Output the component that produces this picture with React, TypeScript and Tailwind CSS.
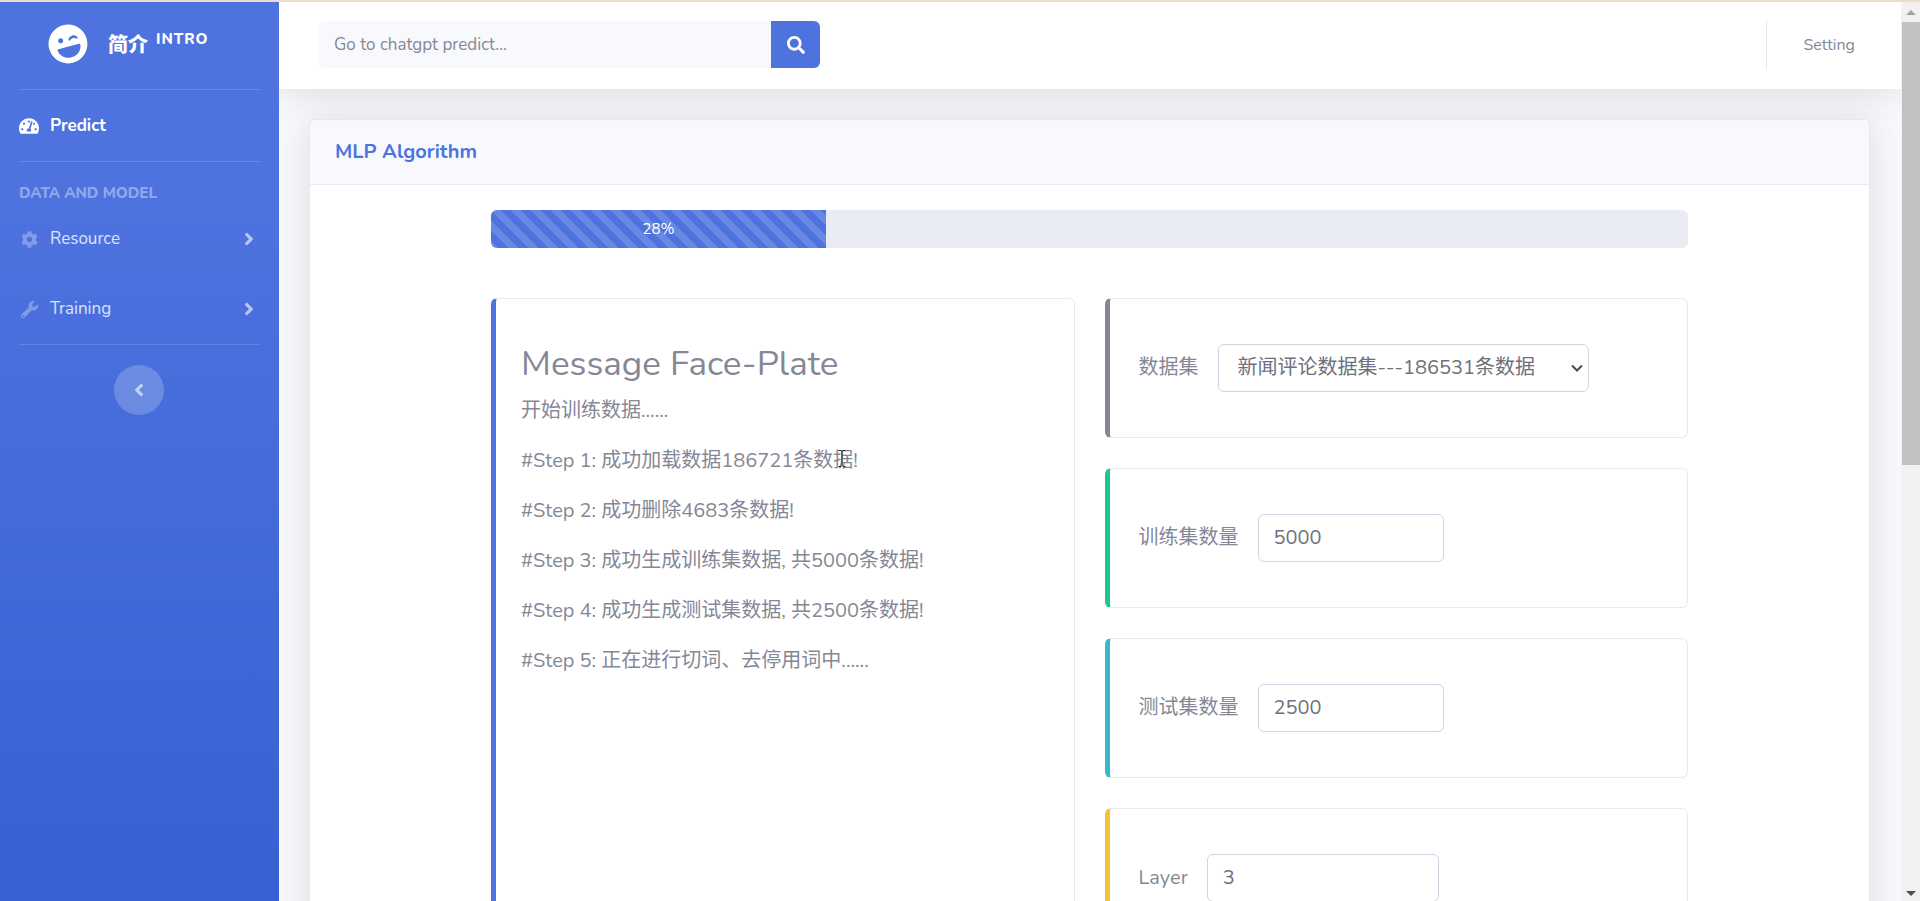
import type { ReactNode } from 'react';
import {
  FaAngleLeft,
  FaAngleRight,
  FaCog,
  FaLaughWink,
  FaSearch,
  FaTachometerAlt,
  FaWrench,
} from 'react-icons/fa';

const STEPS = [
  '#Step 1: 成功加载数据186721条数据!',
  '#Step 2: 成功删除4683条数据!',
  '#Step 3: 成功生成训练集数据, 共5000条数据!',
  '#Step 4: 成功生成测试集数据, 共2500条数据!',
  '#Step 5: 正在进行切词、去停用词中......',
];

const PROGRESS = 28;

function Divider() {
  return <hr className="mx-[19px] border-t border-white/15" />;
}

function NavItem({ icon, label }: { icon: ReactNode; label: string }) {
  return (
    <a href="#" className="flex h-[70px] items-center pl-[19px] pr-5 text-[17px] text-white/80">
      <span className="flex w-5 justify-center text-[17px] text-white/30">{icon}</span>
      <span className="ml-[11px] flex-1">{label}</span>
      <FaAngleRight className="text-xl text-white/60" />
    </a>
  );
}

function Sidebar() {
  return (
    <nav className="flex w-[279px] shrink-0 flex-col bg-linear-to-b from-[#4e73df] from-20% to-[#3860d2]">
      <a href="#" className="flex h-[87px] items-center pl-12 font-extrabold text-white">
        <FaLaughWink className="mb-1 -rotate-15 text-[40px]" />
        <span className="ml-5 text-xl">简介</span>
        <span className="mb-3 ml-2 text-[15px] tracking-[1px]">INTRO</span>
      </a>
      <Divider />
      <a href="#" className="flex h-[71px] items-center pl-[19px] text-[17px] font-bold text-white">
        <FaTachometerAlt className="text-xl" />
        <span className="ml-[11px]">Predict</span>
      </a>
      <Divider />
      <h2 className="pt-5 pl-[19px] text-[15px] leading-[22px] font-extrabold text-white/40">DATA AND MODEL</h2>
      <NavItem icon={<FaCog />} label="Resource" />
      <NavItem icon={<FaWrench />} label="Training" />
      <Divider />
      <button
        type="button"
        aria-label="Collapse sidebar"
        className="mt-5 ml-[114px] flex size-[50px] items-center justify-center rounded-full bg-white/20 text-xl text-white/60"
      >
        <FaAngleLeft />
      </button>
    </nav>
  );
}

function Topbar() {
  return (
    <header className="relative flex h-[87px] shrink-0 items-center bg-white pr-[46px] pb-0.5 pl-10 shadow-[0_3px_35px_rgba(58,59,69,0.15)]">
      <form className="flex h-[47px] w-[501px]">
        <input
          type="text"
          aria-label="Search"
          placeholder="Go to chatgpt predict..."
          className="min-w-0 flex-1 rounded-l-md bg-[#f8f9fc] px-[15px] text-[17px] text-[#6e707e] placeholder:text-[#858796]"
        />
        <button
          type="button"
          aria-label="Go"
          className="flex w-[49px] items-center justify-center rounded-r-md bg-[#4e73df] text-lg text-white"
        >
          <FaSearch />
        </button>
      </form>
      <div className="ml-auto h-12 w-px bg-[#e3e6f0]" />
      <a href="#" className="ml-9 text-base">
        Setting
      </a>
    </header>
  );
}

function TextCursor() {
  return (
    <svg
      viewBox="0 0 8 17"
      className="absolute top-1 left-[317px] h-[17px] w-2"
      fill="none"
      stroke="#222"
      strokeWidth="1"
    >
      <path d="M0.5 0.5H3L4 1.5L5 0.5H7.5M4 1.5V15.5M0.5 16.5H3L4 15.5L5 16.5H7.5" />
    </svg>
  );
}

function MessagePanel() {
  return (
    <section className="rounded-md border border-l-[5px] border-[#e9eaf0] border-l-[#4e73df] px-[25px] pt-11 pb-6">
      <h1 className="mb-[11px] text-[35px] leading-[42px]">Message Face-Plate</h1>
      <p className="mb-5 leading-[30px]">开始训练数据......</p>
      {STEPS.map((step, i) => (
        <p key={step} className="relative mb-5 leading-[30px]">
          {step}
          {i === 0 && <TextCursor />}
        </p>
      ))}
    </section>
  );
}

function Field({ accent, children }: { accent: string; children: ReactNode }) {
  return (
    <div className={`flex h-[140px] items-center rounded-md border border-l-[5px] border-[#e9eaf0] pl-[29px] ${accent}`}>
      {children}
    </div>
  );
}

interface NumberFieldProps {
  id: string;
  label: string;
  value: string;
  accent: string;
  width: string;
}

function NumberField({ id, label, value, accent, width }: NumberFieldProps) {
  return (
    <Field accent={accent}>
      <label htmlFor={id}>{label}</label>
      <input
        id={id}
        type="text"
        defaultValue={value}
        className={`ml-[19px] h-12 rounded-md border border-[#d1d3e2] bg-white px-[15px] pb-0.5 text-[#6e707e] ${width}`}
      />
    </Field>
  );
}

function Settings() {
  return (
    <form className="flex flex-col gap-[30px]">
      <Field accent="border-l-[#858796]">
        <label htmlFor="dataset">数据集</label>
        <div className="relative ml-[19px] w-[371px]">
          <select
            id="dataset"
            className="h-12 w-full appearance-none rounded-md border border-[#d1d3e2] bg-white pl-[19px] text-[#6e707e]"
          >
            <option>新闻评论数据集---186531条数据</option>
          </select>
          <svg
            viewBox="0 0 12 8"
            className="pointer-events-none absolute top-5 right-1.5 h-2 w-3"
            fill="none"
            stroke="#4a4b55"
            strokeWidth="2"
          >
            <path d="M1 1.5L6 6.5L11 1.5" />
          </svg>
        </div>
      </Field>
      <NumberField id="train" label="训练集数量" value="5000" accent="border-l-[#1cc88a]" width="w-[186px]" />
      <NumberField id="test" label="测试集数量" value="2500" accent="border-l-[#36b9cc]" width="w-[186px]" />
      <NumberField id="layer" label="Layer" value="3" accent="border-l-[#f6c23e]" width="w-[232px]" />
    </form>
  );
}

function ProgressBar() {
  return (
    <div className="h-[38px] overflow-hidden rounded-md bg-[#eaecf4]">
      <div
        role="progressbar"
        aria-valuenow={PROGRESS}
        className="flex h-full items-center justify-center bg-[#4e73df] bg-[linear-gradient(45deg,rgba(255,255,255,0.15)_25%,transparent_25%,transparent_50%,rgba(255,255,255,0.15)_50%,rgba(255,255,255,0.15)_75%,transparent_75%,transparent)] bg-[length:20px_20px] text-[15px] text-white"
        style={{ width: `${PROGRESS}%` }}
      >
        {PROGRESS}%
      </div>
    </div>
  );
}

function Scrollbar() {
  return (
    <div aria-hidden="true" className="flex w-[19px] shrink-0 flex-col items-center bg-[#f1f1f1]">
      <svg viewBox="0 0 10 5" className="mt-2 mb-[7px] h-[5px] w-2.5" fill="#a3a3a3">
        <path d="M0 5L5 0L10 5Z" />
      </svg>
      <div className="ml-px h-[443px] w-[18px] bg-[#c1c1c1]" />
      <svg viewBox="0 0 10 5" className="mt-auto mb-[5px] h-[5px] w-2.5" fill="#505050">
        <path d="M0 0L5 5L10 0Z" />
      </svg>
    </div>
  );
}

export default function App() {
  return (
    <div className="flex h-screen overflow-hidden border-t-2 border-[#ecdccd] bg-[#f8f9fc] font-['Nunito','Open_Sans','Noto_Sans_CJK_SC',sans-serif] text-xl text-[#858796]">
      <Sidebar />
      <div className="flex min-w-0 flex-1 flex-col overflow-hidden">
        <Topbar />
        <main className="pt-[30px] pr-[31px] pl-[30px]">
          <div className="rounded-md border border-[#e9eaf0] bg-white shadow-[0_3px_35px_rgba(58,59,69,0.15)]">
            <h2 className="rounded-t-md border-b border-[#e9eaf0] bg-[#f8f9fc] px-[25px] py-[17px] text-xl leading-[30px] font-bold text-[#4e73df]">
              MLP Algorithm
            </h2>
            <div className="mx-auto max-w-[1197px] py-[25px]">
              <ProgressBar />
              <div className="mt-[50px] grid grid-cols-2 gap-[30px]">
                <MessagePanel />
                <Settings />
              </div>
            </div>
          </div>
        </main>
      </div>
      <Scrollbar />
    </div>
  );
}
